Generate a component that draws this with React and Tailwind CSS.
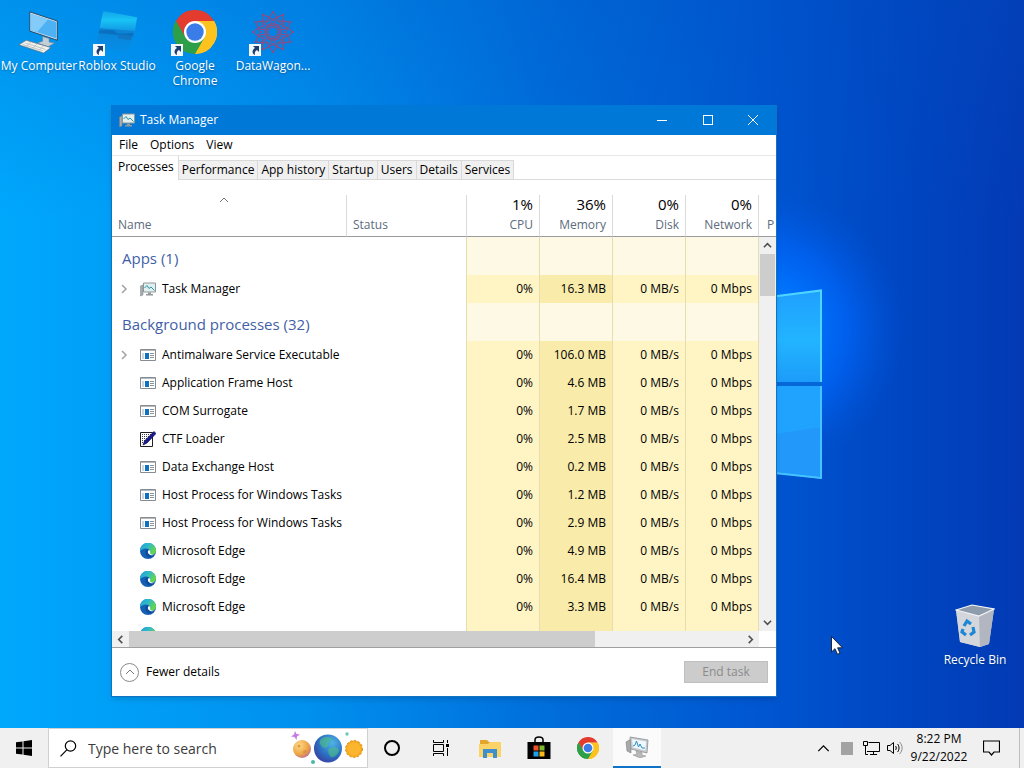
import React from 'react';

const TABS = ['Processes', 'Performance', 'App history', 'Startup', 'Users', 'Details', 'Services'];

const USAGE = [
    { label: 'CPU', total: '1%' },
    { label: 'Memory', total: '36%' },
    { label: 'Disk', total: '0%' },
    { label: 'Network', total: '0%' },
];

const GROUPS = [
    {
        title: 'Apps (1)',
        rows: [{ name: 'Task Manager', icon: 'taskmgr', memory: '16.3 MB', expandable: true }],
    },
    {
        title: 'Background processes (32)',
        rows: [
            { name: 'Antimalware Service Executable', icon: 'exe', memory: '106.0 MB', expandable: true },
            { name: 'Application Frame Host', icon: 'exe', memory: '4.6 MB' },
            { name: 'COM Surrogate', icon: 'exe', memory: '1.7 MB' },
            { name: 'CTF Loader', icon: 'ctf', memory: '2.5 MB' },
            { name: 'Data Exchange Host', icon: 'exe', memory: '0.2 MB' },
            { name: 'Host Process for Windows Tasks', icon: 'exe', memory: '1.2 MB' },
            { name: 'Host Process for Windows Tasks', icon: 'exe', memory: '2.9 MB' },
            { name: 'Microsoft Edge', icon: 'edge', memory: '4.9 MB' },
            { name: 'Microsoft Edge', icon: 'edge', memory: '16.4 MB' },
            { name: 'Microsoft Edge', icon: 'edge', memory: '3.3 MB' },
        ],
    },
];

function Wallpaper() {
    return (
        <svg className="absolute inset-0 h-full w-full" viewBox="0 0 1024 728" preserveAspectRatio="none" aria-hidden="true">
            <defs>
                <linearGradient id="sky" x1="0" y1="0" x2="1" y2="0">
                    <stop offset="0" stopColor="#00a8fc" />
                    <stop offset="0.3" stopColor="#0090ee" />
                    <stop offset="0.55" stopColor="#006cda" />
                    <stop offset="0.75" stopColor="#0055d0" />
                    <stop offset="0.88" stopColor="#0046c2" />
                    <stop offset="1" stopColor="#033ab4" />
                </linearGradient>
                <linearGradient id="skyTop" x1="0" y1="0" x2="0" y2="1">
                    <stop offset="0" stopColor="#0050c0" stopOpacity="0.25" />
                    <stop offset="0.3" stopColor="#0050c0" stopOpacity="0" />
                </linearGradient>
                <radialGradient id="glow" gradientUnits="userSpaceOnUse" cx="765" cy="330" r="140">
                    <stop offset="0" stopColor="#0a90ff" />
                    <stop offset="0.35" stopColor="#0074ff" stopOpacity="0.9" />
                    <stop offset="0.6" stopColor="#0066fa" stopOpacity="0.7" />
                    <stop offset="1" stopColor="#0058e0" stopOpacity="0" />
                </radialGradient>
                <linearGradient id="paneTop" x1="0" y1="0" x2="0" y2="1">
                    <stop offset="0" stopColor="#1fa0ff" />
                    <stop offset="0.55" stopColor="#22b4ff" />
                    <stop offset="1" stopColor="#1c9cfa" />
                </linearGradient>
            </defs>
            <rect width="1024" height="728" fill="url(#sky)" />
            <rect width="1024" height="728" fill="url(#skyTop)" />
            <rect x="560" y="150" width="400" height="400" fill="url(#glow)" />
            <path d="M700 306L822 290V382H700z" fill="url(#paneTop)" />
            <path d="M700 386H822V479L700 464z" fill="#2198fa" />
            <path d="M700 386H822V427L770 435L700 440z" fill="#20a2ff" />
            <path d="M700 306L821 290.500V382" fill="none" stroke="#4fd6ff" strokeWidth="2" />
            <path d="M821 386V478L700 465" fill="none" stroke="#45c4ff" strokeWidth="2" />
            <path d="M700 384H822" stroke="#0868d0" strokeWidth="3" />
        </svg>
    );
}

function ChromeIcon({ className }) {
    return (
        <svg viewBox="0 0 48 48" className={className} aria-hidden="true">
            <path d="M24 24L44.800 12A24 24 0 0 1 24 48z" fill="#fcc31e" />
            <path d="M44.800 12A24 24 0 0 1 24 48L34.400 30L24 12z" fill="#fcc31e" />
            <path d="M3.200 12A24 24 0 0 0 24 48L34.400 30H24L13.600 30z" fill="#2d9f48" />
            <path d="M3.200 12A24 24 0 0 1 44.800 12H24L13.600 30z" fill="#e33b2e" />
            <path d="M3.200 12L13.600 30L24 36L17 46.900A24 24 0 0 1 3.200 12z" fill="#2d9f48" />
            <circle cx="24" cy="24" r="12" fill="#fff" />
            <circle cx="24" cy="24" r="9.500" fill="#3b7de8" />
        </svg>
    );
}

function ComputerIcon({ className }) {
    return (
        <svg viewBox="0 0 48 48" className={className} aria-hidden="true">
            <path d="M14 2L44 12V33L14 23z" fill="#d7e3ec" stroke="#1e3f5c" />
            <path d="M15 4L43 13V31L15 22z" fill="#4db1f4" />
            <path d="M15 4L34 10L22 24L15 22z" fill="#83cbf8" />
            <path d="M28 29L35 31V35L41 36L34 40L22 36L28 34z" fill="#c3ced6" stroke="#6a7f8e" strokeWidth="0.600" />
            <path d="M10 33L37 41L29 47L2 38z" fill="#f1f1ec" stroke="#5c7385" strokeWidth="0.800" />
            <path d="M9 36L31 43M6 37.500L28 44.500M15 35L10 40M22 37L17 42M29 39L24 44" stroke="#b1b8bb" strokeWidth="0.800" />
        </svg>
    );
}

function RobloxIcon({ className }) {
    return (
        <svg viewBox="0 0 48 48" className={className} aria-hidden="true">
            <defs>
                <linearGradient id="rbx" x1="0" y1="0" x2="0" y2="1">
                    <stop offset="0" stopColor="#10a4e8" />
                    <stop offset="0.4" stopColor="#19c3f5" />
                    <stop offset="1" stopColor="#0d8de0" />
                </linearGradient>
                <linearGradient id="rbxBase" x1="0" y1="0" x2="0" y2="1">
                    <stop offset="0" stopColor="#0c80d2" />
                    <stop offset="1" stopColor="#0c8ae0" stopOpacity="0.3" />
                </linearGradient>
            </defs>
            <path d="M9 1L46 8L43 26L5 20z" fill="url(#rbx)" />
            <path d="M5 20L43 23L37 47L1 40z" fill="url(#rbxBase)" />
            <path d="M5 22L20 22L25 26L42 25L41 29L4 25z" fill="#0a6cb8" opacity="0.8" />
            <path d="M26 27L40 28L39 33L25 31z" fill="#1177c4" />
        </svg>
    );
}

function DataWagonIcon({ className }) {
    const angles = [0, 30, 60, 90, 120, 150, 180, 210, 240, 270, 300, 330];
    return (
        <svg viewBox="0 0 48 48" className={className} aria-hidden="true">
            <g fill="none" stroke="#c03a63" strokeWidth="0.800" opacity="0.8">
                {angles.map(a => (
                    <g key={a} transform={`rotate(${a} 24 24)`}>
                        <path d="M24 18L19 10L24 2L29 10zM24 10L16 6M24 10L32 6M21 18L24 14L27 18" />
                        <circle cx="24" cy="2.500" r="1" fill="#c03a63" />
                        <circle cx="24" cy="11" r="0.800" fill="#c03a63" />
                    </g>
                ))}
                <circle cx="24" cy="24" r="5" />
            </g>
        </svg>
    );
}

function TaskManagerIcon({ className }) {
    return (
        <svg viewBox="0 0 16 16" className={className} aria-hidden="true">
            <path d="M0.500 5L3 4V14L0.500 15z" fill="#a8adb0" stroke="#7b8082" strokeWidth="0.500" />
            <path d="M3.500 2H15.500V11H3.500z" fill="#dff0ee" stroke="#8f9699" />
            <path d="M4.500 7L7 4.500L9 7.500L11 6L14.500 9.500" fill="none" stroke="#2f93a8" strokeWidth="1" />
            <path d="M8 11.500H11V13H13V14.500H6V13H8z" fill="#92989b" />
        </svg>
    );
}

function MonitorTaskIcon({ className }) {
    return (
        <svg viewBox="0 0 24 22" className={className} aria-hidden="true">
            <path d="M1 6L6 3V17L2 15z" fill="#a9a9a9" stroke="#808080" strokeWidth="0.600" />
            <path d="M5 1L23 4L22 17L6 13z" fill="#c5cbd0" stroke="#8b8f92" strokeWidth="0.800" />
            <path d="M7 3L21 5.500L20.500 14.500L8 11.500z" fill="#eef8fd" />
            <path d="M8 10L10 9L11.500 5L13.500 11L15 8L17 12L20 12" fill="none" stroke="#2f8cc4" />
            <path d="M11 15L17 16.500V19L21 20L15 22L8 19L12 18z" fill="#b9b9b9" stroke="#8a8a8a" strokeWidth="0.500" />
        </svg>
    );
}

function ExeIcon({ className }) {
    return (
        <svg viewBox="0 0 16 12" className={className} aria-hidden="true">
            <path d="M0.500 0.500H15.500V11.500H0.500z" fill="#fff" stroke="#858b90" />
            <path d="M1 1H15V2H1z" fill="#b5babd" />
            <path d="M2 4H4V10H2z" fill="#cfd5d9" />
            <path d="M5 4H9V10H5z" fill="#0f6fc0" />
            <path d="M10 4.500H14M10 6.500H14M10 8.500H14" stroke="#8d9498" />
        </svg>
    );
}

function CtfIcon({ className }) {
    return (
        <svg viewBox="0 0 16 16" className={className} aria-hidden="true">
            <path d="M0.500 1.500H12.500V15.500H0.500z" fill="#fff" stroke="#202020" />
            <path d="M2 3.500H11M2 5.500H9M2 7.500H8M2 9.500H6M2 11.500H4" stroke="#404040" strokeDasharray="1 1" />
            <path d="M14 0.500L16 2.500L7 12L3 14L4.500 10z" fill="#1a1a90" stroke="#0a0a50" strokeWidth="0.700" />
        </svg>
    );
}

function EdgeIcon({ className }) {
    return (
        <svg viewBox="0 0 16 16" className={className} aria-hidden="true">
            <defs>
                <linearGradient id="edgeTop" x1="0" y1="0" x2="1" y2="0.500">
                    <stop offset="0" stopColor="#1f9fe0" />
                    <stop offset="0.5" stopColor="#2fb9c9" />
                    <stop offset="1" stopColor="#63d948" />
                </linearGradient>
            </defs>
            <circle cx="8" cy="8" r="8" fill="#1560b4" />
            <path d="M0 8A8 8 0 0 1 16 7.500C16 10 14 11.500 12 11.500C10 11.500 9.500 10.500 10 9.500C10.500 7 8.500 5.500 6 5.500C3 5.500 1 7 0 8z" fill="url(#edgeTop)" />
            <path d="M6.500 6.500C5 8 5 11.500 7.500 13.500C9.500 15 12.500 14.500 14.800 12.200C12.500 13 9.500 12.500 8.200 10.500C7.300 9 7.500 7.500 8.500 6.800z" fill="#0d4a98" />
            <path d="M8.800 7C7.500 8 7.600 9.800 8.800 11C10.500 12.600 13 12.600 15 11.500C13.500 11.800 11.500 11.600 10.300 10.700C9.800 10.200 10.300 9.500 10.200 8.700C10.100 7.800 9.500 7 8.800 7z" fill="#fff" />
        </svg>
    );
}

function RowIcon({ kind }) {
    switch (kind) {
        case 'taskmgr':
            return <TaskManagerIcon className="size-4" />;
        case 'ctf':
            return <CtfIcon className="size-4" />;
        case 'edge':
            return <EdgeIcon className="size-4" />;
        default:
            return <ExeIcon className="h-3 w-4" />;
    }
}

function Chevron({ d, className }) {
    return (
        <svg viewBox="0 0 10 10" className={className} fill="none" stroke="currentColor" aria-hidden="true">
            <path d={d} />
        </svg>
    );
}

const UP = 'M1 7L5 3L9 7';
const DOWN = 'M1 3L5 7L9 3';
const LEFT = 'M7 1L3 5L7 9';
const RIGHT = 'M3 1L7 5L3 9';

function ShortcutArrow() {
    return (
        <svg viewBox="0 0 12 12" className="size-3" aria-hidden="true">
            <path d="M0 0H12V12H0z" fill="#f4f8fb" />
            <path d="M4 2H10V8L8 6C6 7 5.500 8.500 6 11C3 10 2.500 6 6 4z" fill="#1b3f70" />
        </svg>
    );
}

function DesktopIcon({ label, shortcut, children }) {
    return (
        <button className="flex w-[78px] flex-col items-center gap-0.5 text-[12px] leading-[15px] text-white [text-shadow:0_1px_2px_#00306080]">
            <span className="relative flex h-12 w-full items-center justify-center">
                {children}
                {shortcut && (
                    <span className="absolute bottom-0 left-[15px]">
                        <ShortcutArrow />
                    </span>
                )}
            </span>
            <span>{label}</span>
        </button>
    );
}

function TitleBar() {
    return (
        <div className="flex h-[30px] shrink-0 items-center bg-[#0078d7] pl-[7px] text-white">
            <TaskManagerIcon className="size-4" />
            <h1 className="ml-[5px] flex-1 text-[12px]">Task Manager</h1>
            <button aria-label="Minimize" className="flex h-full w-[46px] items-center justify-center">
                <span className="h-px w-[10px] bg-white"></span>
            </button>
            <button aria-label="Maximize" className="flex h-full w-[45px] items-center justify-center">
                <span className="size-[10px] border border-white"></span>
            </button>
            <button aria-label="Close" className="flex h-full w-[46px] items-center justify-center">
                <svg viewBox="0 0 10 10" className="size-[10px]" stroke="#fff" aria-hidden="true">
                    <path d="M0 0L10 10M10 0L0 10" />
                </svg>
            </button>
        </div>
    );
}

function TabBar() {
    return (
        <div role="tablist" className="flex h-[25px] shrink-0 items-end border-t border-[#e8e8e8] text-[12px]">
            {TABS.map((tab, i) => (
                <button
                    key={tab}
                    role="tab"
                    aria-selected={i === 0}
                    className={
                        i === 0
                            ? 'h-6 border-r border-[#d9d9d9] bg-white pr-1 pb-0.5 pl-1.5'
                            : 'h-5 border-t border-r border-b border-[#d9d9d9] bg-[#f0f0f0] px-[3px]'
                    }
                >
                    {tab}
                </button>
            ))}
            <div className="flex-1 self-stretch border-b border-[#d9d9d9]"></div>
        </div>
    );
}

function UsageCells({ values }) {
    return values.map((value, i) => (
        <td
            key={i}
            className={
                'border-r border-[#e6dcae] pr-1.5 text-right ' +
                (value === '' ? 'bg-[#fef9e5]' : i === 1 ? 'bg-[#f9ecab]' : 'bg-[#fff4c4]')
            }
        >
            {value}
        </td>
    ));
}

function ProcessTable() {
    return (
        <div className="relative min-h-0 flex-1 overflow-hidden pt-[15px]">
            <table className="w-full table-fixed border-separate border-spacing-0 text-[12px] whitespace-nowrap">
                <colgroup>
                    <col />
                    <col className="w-[120px]" />
                    <col className="w-[73px]" />
                    <col className="w-[73px]" />
                    <col className="w-[73px]" />
                    <col className="w-[73px]" />
                    <col className="w-[17px]" />
                </colgroup>
                <thead>
                    <tr className="h-[42px] text-[#5d6b7c]">
                        <th className="border-r border-b border-r-[#dadada] border-b-[#9b9b9b] pr-4 pl-1.5 text-left font-normal">
                            <span className="flex h-[41px] flex-col justify-between">
                                <Chevron d={UP} className="size-[10px] self-center text-[#707070]" />
                                <span className="leading-[22px]">Name</span>
                            </span>
                        </th>
                        <th className="border-r border-b border-r-[#dadada] border-b-[#9b9b9b] pl-1.5 text-left align-bottom font-normal leading-[22px]">
                            Status
                        </th>
                        {USAGE.map(col => (
                            <th key={col.label} className="border-r border-b border-r-[#dadada] border-b-[#9b9b9b] pr-1.5 text-right font-normal">
                                <span className="flex h-[41px] flex-col justify-between">
                                    <span className="text-[15px] leading-[18px] text-black">{col.total}</span>
                                    <span className="leading-[22px]">{col.label}</span>
                                </span>
                            </th>
                        ))}
                        <th className="overflow-hidden border-b border-[#9b9b9b] pl-2 text-left align-bottom font-normal leading-[22px]">P</th>
                    </tr>
                </thead>
                <tbody>
                    {GROUPS.map(group => (
                        <React.Fragment key={group.title}>
                            <tr className="h-[38px]">
                                <th colSpan={2} className="border-r border-[#e6dcae] pt-1 pl-2.5 text-left text-[15px] font-normal text-[#3f5fa8]">
                                    {group.title}
                                </th>
                                <UsageCells values={['', '', '', '']} />
                                <td></td>
                            </tr>
                            {group.rows.map((row, i) => (
                                <tr key={i} className="h-7">
                                    <td colSpan={2} className="border-r border-[#e6dcae] pl-[7px]">
                                        <span className="flex items-center">
                                            <span className="w-[21px]">
                                                {row.expandable && (
                                                    <button aria-label={'Expand ' + row.name} className="flex">
                                                        <Chevron d={RIGHT} className="size-[10px] stroke-[1.6] text-[#a6a6a6]" />
                                                    </button>
                                                )}
                                            </span>
                                            <RowIcon kind={row.icon} />
                                            <span className="ml-1.5">{row.name}</span>
                                        </span>
                                    </td>
                                    <UsageCells values={['0%', row.memory, '0 MB/s', '0 Mbps']} />
                                    <td></td>
                                </tr>
                            ))}
                        </React.Fragment>
                    ))}
                    <tr className="h-7">
                        <td colSpan={2} className="border-r border-[#e6dcae] pl-7">
                            <EdgeIcon className="size-4" />
                        </td>
                        <UsageCells values={[' ', ' ', ' ', ' ']} />
                        <td></td>
                    </tr>
                </tbody>
            </table>
            {/* vertical scrollbar sits over the clipped last column */}
            <div className="absolute top-[57px] right-0 bottom-0 flex w-[17px] flex-col bg-[#f0f0f0]">
                <button aria-label="Scroll up" className="flex h-[17px] items-center justify-center">
                    <Chevron d={UP} className="size-[9px] stroke-[1.8] text-[#505050]" />
                </button>
                <div className="flex-1 px-px">
                    <div className="h-[42px] bg-[#cdcdcd]"></div>
                </div>
                <button aria-label="Scroll down" className="flex h-[17px] items-center justify-center">
                    <Chevron d={DOWN} className="size-[9px] stroke-[1.8] text-[#505050]" />
                </button>
            </div>
        </div>
    );
}

function HorizontalScrollbar() {
    return (
        <div className="flex h-[17px] shrink-0 border-b border-[#a0a0a0] pr-[17px]">
            <div className="flex flex-1 bg-[#f0f0f0]">
                <button aria-label="Scroll left" className="flex w-[17px] items-center justify-center">
                    <Chevron d={LEFT} className="size-[9px] stroke-[1.8] text-[#505050]" />
                </button>
                <div className="flex-1">
                    <div className="h-full w-[76%] bg-[#cdcdcd]"></div>
                </div>
                <button aria-label="Scroll right" className="flex w-[17px] items-center justify-center">
                    <Chevron d={RIGHT} className="size-[9px] stroke-[1.8] text-[#505050]" />
                </button>
            </div>
        </div>
    );
}

function TaskManagerWindow() {
    return (
        <section className="absolute top-[105px] right-[247px] bottom-[31px] left-[111px] flex min-w-[480px] flex-col border border-t-0 border-[#1173c4] bg-white text-black shadow-md">
            <TitleBar />
            <div className="flex h-5 shrink-0 items-center gap-3 px-[7px] text-[12px]">
                <button>File</button>
                <button>Options</button>
                <button>View</button>
            </div>
            <TabBar />
            <ProcessTable />
            <HorizontalScrollbar />
            <div className="flex h-12 shrink-0 items-center justify-between pr-2 pl-2 text-[12px]">
                <button className="flex items-center gap-[7px]">
                    <span className="flex size-[19px] items-center justify-center rounded-full border border-[#8a8a8a]">
                        <Chevron d={UP} className="size-[10px] text-[#777777]" />
                    </span>
                    Fewer details
                </button>
                <button disabled className="h-[22px] w-[84px] border border-[#bfbfbf] bg-[#cccccc] text-[#8b8b8b]">
                    End task
                </button>
            </div>
        </section>
    );
}

function RecycleBinIcon({ className }) {
    return (
        <svg viewBox="0 0 40 44" className={className} aria-hidden="true">
            <path d="M1 6L17 1L39 5L34 40L25 43L5 38z" fill="#c9cdd3" />
            <path d="M1 6L24 12L25 43L5 38z" fill="#d3d6db" />
            <path d="M24 12L39 5L34 40L25 43z" fill="#b2b6c0" />
            <path d="M1 6L17 1L39 5L24 12z" fill="#8f9cab" stroke="#f2f4f6" strokeWidth="1.200" />
            <g fill="none" stroke="#1d86d6" strokeWidth="3.200">
                <path d="M9 22L12 17L16 20" />
                <path d="M18 23L19 28L15 31" />
                <path d="M11 31L7 28L8 25" />
            </g>
        </svg>
    );
}

function SearchArt() {
    return (
        <svg viewBox="0 0 76 36" className="h-9 w-[76px]" aria-hidden="true">
            <defs>
                <radialGradient id="venus" cx="0.350" cy="0.300" r="0.800">
                    <stop offset="0" stopColor="#ffd98a" />
                    <stop offset="0.6" stopColor="#eda745" />
                    <stop offset="1" stopColor="#b9689a" />
                </radialGradient>
                <radialGradient id="earth" cx="0.650" cy="0.300" r="0.800">
                    <stop offset="0" stopColor="#4fb4e6" />
                    <stop offset="0.6" stopColor="#2b6fc0" />
                    <stop offset="1" stopColor="#3a3aa0" />
                </radialGradient>
            </defs>
            <path d="M5 1L6.500 4L10 4.500L7 6.500L6.500 10L4.500 7L1 6.500L4 4.500z" fill="#c67be0" />
            <circle cx="12" cy="19" r="9" fill="url(#venus)" />
            <circle cx="9" cy="16" r="1.500" fill="#e09a3c" />
            <circle cx="15" cy="22" r="2" fill="#dd9440" />
            <circle cx="38" cy="18.500" r="14" fill="url(#earth)" />
            <path d="M31 9C35 6 40 7 42 9C40 12 38 12 38 16C36 19 32 18 31 15C29 14 29 11 31 9zM40 18C45 16 49 18 49 21C47 26 43 28 41 27C38 24 37 20 40 18z" fill="#4fbf86" opacity="0.6" />
            <circle cx="64" cy="19" r="8.500" fill="#f6ab22" stroke="#d88a12" strokeDasharray="2 2" />
            <circle cx="64" cy="19" r="6.500" fill="#fbb52f" />
            <circle cx="23" cy="32" r="2" fill="#4ab8a8" />
            <circle cx="57" cy="4" r="1.700" fill="#6cc7bd" />
        </svg>
    );
}

function TaskbarApps() {
    return (
        <div className="flex gap-px">
            <button aria-label="Cortana" className="flex w-12 items-center justify-center">
                <span className="size-4 rounded-full border-2 border-black"></span>
            </button>
            <button aria-label="Task View" className="flex w-12 items-center justify-center">
                <svg viewBox="0 0 18 16" className="h-4 w-[18px]" fill="none" stroke="#000" aria-hidden="true">
                    <path d="M1.500 0V2.500H11.500V0M1.500 4.500H11.500V11.500H1.500zM1.500 16V13.500H11.500V16M15.500 0V3M15.500 8V16" />
                    <path d="M14 4H17V7H14z" fill="#000" stroke="none" />
                </svg>
            </button>
            <button aria-label="File Explorer" className="flex w-12 items-center justify-center">
                <svg viewBox="0 0 22 19" className="h-[19px] w-[22px]" aria-hidden="true">
                    <path d="M1 1H8L10 3H21V17H1z" fill="#e3a62a" />
                    <path d="M0 5H9L11 3H22V18H0z" fill="#fbd367" />
                    <path d="M4 10H18V19H14V14H8V19H4z" fill="#3f8fcc" />
                </svg>
            </button>
            <button aria-label="Microsoft Store" className="flex w-12 items-center justify-center">
                <svg viewBox="0 0 24 24" className="size-6" aria-hidden="true">
                    <path d="M8 7V4C8 0 16 0 16 4V7" fill="none" stroke="#000" strokeWidth="1.500" />
                    <path d="M0.500 6H23.500V23H0.500z" fill="#000" />
                    <path d="M6.500 9.500H11.500V14.500H6.500z" fill="#f0502a" />
                    <path d="M12.500 9.500H17.500V14.500H12.500z" fill="#7fba2c" />
                    <path d="M6.500 15.500H11.500V20.500H6.500z" fill="#18a3ec" />
                    <path d="M12.500 15.500H17.500V20.500H12.500z" fill="#fdb913" />
                </svg>
            </button>
            <button aria-label="Google Chrome" className="flex w-12 items-center justify-center">
                <ChromeIcon className="size-[22px]" />
            </button>
            <button aria-label="Task Manager" className="flex w-12 items-center justify-center border-b-2 border-[#0f74c8] bg-[#fbfbfb]">
                <MonitorTaskIcon className="h-[22px] w-6" />
            </button>
        </div>
    );
}

function Tray() {
    return (
        <div className="ml-auto flex items-stretch">
            <button aria-label="Show hidden icons" className="flex w-6 items-center justify-center">
                <Chevron d={UP} className="size-[13px] text-black" />
            </button>
            <span className="flex w-6 items-center justify-center">
                <span className="h-[13px] w-3 bg-[#a3a3a3]"></span>
            </span>
            <button aria-label="Network" className="flex w-6 items-center justify-center">
                <svg viewBox="0 0 17 14" className="h-3.5 w-[17px]" fill="none" stroke="#000" aria-hidden="true">
                    <path d="M5.500 1.500H16.500V10.500H4M10.500 10.500V13M7 13.500H14M0.500 0.500H4.500V4.500H0.500zM2.500 4.500V13.500H5" />
                </svg>
            </button>
            <button aria-label="Volume" className="flex w-6 items-center justify-center">
                <svg viewBox="0 0 16 14" className="h-3.5 w-4" fill="none" stroke="#000" aria-hidden="true">
                    <path d="M0.500 4.500H3L6.500 1.500V12.500L3 9.500H0.500z" />
                    <path d="M8.500 5C9.500 6 9.500 8 8.500 9M10.500 3C12.500 5 12.500 9 10.500 11" />
                    <path d="M12.500 1C16 4.500 16 9.500 12.500 13" stroke="#8a8a8a" />
                </svg>
            </button>
            <button className="ml-1 flex w-14 flex-col items-center justify-center text-[12px] leading-[18px]">
                <span>8:22 PM</span>
                <span>9/22/2022</span>
            </button>
            <button aria-label="Notifications" className="flex w-12 items-center justify-center">
                <svg viewBox="0 0 17 16" className="h-4 w-[17px]" fill="none" stroke="#000" strokeWidth="1.200" aria-hidden="true">
                    <path d="M0.500 1H16.500V12H11L8.500 15L6 12H0.500z" />
                </svg>
            </button>
            <button aria-label="Show desktop" className="ml-1 w-[5px] border-l border-[#b9c0c6]"></button>
        </div>
    );
}

function Taskbar() {
    return (
        <footer className="flex h-10 shrink-0 bg-[#f0f0f0] text-black">
            <button aria-label="Start" className="flex w-12 items-center justify-center">
                <svg viewBox="0 0 16 16" className="size-4" aria-hidden="true">
                    <path d="M0 2.300L6.500 1.400V7.500H0zM7.500 1.200L16 0V7.500H7.500zM0 8.500H6.500V14.600L0 13.700zM7.500 8.500H16V16L7.500 14.800z" />
                </svg>
            </button>
            <label className="flex w-80 items-center border border-[#d0d0d0] bg-white pr-px pl-[11px]">
                <svg viewBox="0 0 17 17" className="size-[17px] shrink-0" fill="none" stroke="#000" strokeWidth="1.200" aria-hidden="true">
                    <circle cx="10.500" cy="6" r="5.200" />
                    <path d="M6.800 9.800L0.500 16.300" />
                </svg>
                <input
                    type="text"
                    aria-label="Search"
                    placeholder="Type here to search"
                    className="ml-[11px] min-w-0 flex-1 text-[14px] outline-none placeholder:text-[#3c3c3c]"
                />
                <SearchArt />
            </label>
            <TaskbarApps />
            <Tray />
        </footer>
    );
}

export default function App() {
    return (
        <div className="flex min-h-screen flex-col overflow-hidden bg-[#0068d8] font-['Open_Sans','Noto_Sans',sans-serif]">
            <main className="relative flex-1">
                <Wallpaper />
                <div className="relative flex items-start pt-2">
                    <DesktopIcon label="My Computer">
                        <ComputerIcon className="size-11" />
                    </DesktopIcon>
                    <DesktopIcon label="Roblox Studio" shortcut>
                        <RobloxIcon className="size-11" />
                    </DesktopIcon>
                    <DesktopIcon label="Google Chrome" shortcut>
                        <ChromeIcon className="size-11" />
                    </DesktopIcon>
                    <DesktopIcon label="DataWagon..." shortcut>
                        <DataWagonIcon className="size-11" />
                    </DesktopIcon>
                </div>
                <TaskManagerWindow />
                <div className="absolute right-2.5 bottom-[61px]">
                    <DesktopIcon label="Recycle Bin">
                        <RecycleBinIcon className="h-11 w-10" />
                    </DesktopIcon>
                </div>
                <svg viewBox="0 0 12 19" className="absolute top-[636px] left-[831px] h-[19px] w-3" aria-hidden="true">
                    <path d="M0.500 0.500V16L4 12.700L6.500 18.300L9 17.200L6.600 11.800H11.500z" fill="#fff" stroke="#101828" strokeWidth="0.900" />
                </svg>
            </main>
            <Taskbar />
        </div>
    );
}
